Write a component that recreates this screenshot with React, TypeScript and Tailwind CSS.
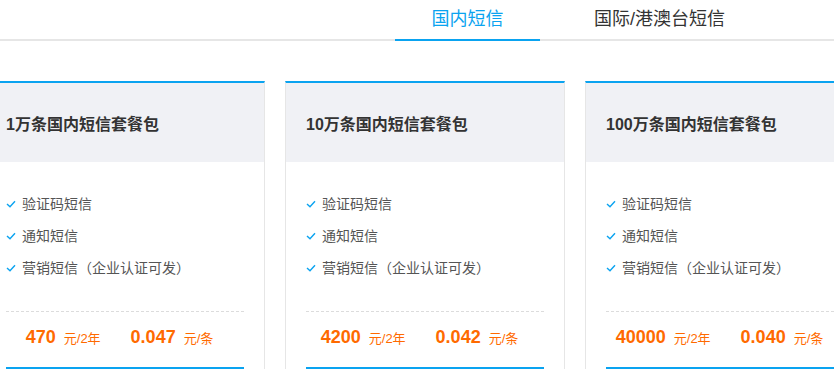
import React from 'react';

interface Pack {
  title: string;
  price: string;
  unit: string;
}

const packs: Pack[] = [
  { title: '1万条国内短信套餐包', price: '470', unit: '0.047' },
  { title: '10万条国内短信套餐包', price: '4200', unit: '0.042' },
  { title: '100万条国内短信套餐包', price: '40000', unit: '0.040' },
];

const features = ['验证码短信', '通知短信', '营销短信（企业认证可发）'];

function Check() {
  return (
    <svg width="10" height="8" viewBox="0 0 10 8" className="shrink-0">
      <polyline points="1,4 4,6.8 9,1.2" fill="none" stroke="#0aa3f0" strokeWidth="1.4" />
    </svg>
  );
}

function PackCard({ pack }: { pack: Pack }) {
  return (
    <div className="w-[280px] shrink-0 border-t-2 border-x border-t-[#0aa3f0] border-x-[#e6e6e6] bg-white">
      <div className="h-[79px] bg-[#f0f1f5] flex items-center px-5 pt-[4px] text-[16px] font-bold text-[#333]">
        {pack.title}
      </div>
      <div className="px-5 pt-[26px]">
        {features.map(f => (
          <div key={f} className="h-8 flex items-center gap-[6px] text-[14px] text-[#555]">
            <Check />
            <span>{f}</span>
          </div>
        ))}
        <div className="mt-[27px] border-t border-dashed border-[#dcdcdc]" />
        <div className="h-[50px] flex items-center justify-center gap-[30px] pr-[11px] text-[#ff6a00]">
          <div className="flex items-baseline">
            <span className="text-[18px] font-bold">{pack.price}</span>
            <span className="ml-[8px] text-[13px]">元/2年</span>
          </div>
          <div className="flex items-baseline">
            <span className="text-[18px] font-bold">{pack.unit}</span>
            <span className="ml-[8px] text-[13px]">元/条</span>
          </div>
        </div>
        {/* buy button, only its top edge is in view */}
        <div className="mt-[5px] h-[40px] border-2 border-[#0aa3f0]" />
      </div>
    </div>
  );
}

export default function App() {
  return (
    <div
      className="w-[834px] h-[369px] overflow-hidden bg-white"
      style={{ fontFamily: '"Liberation Sans", "Noto Sans CJK SC", sans-serif' }}
    >
      <div className="flex h-[41px] border-b-2 border-[#e6e6e6] pl-[395px] text-[18px]">
        <div className="w-[145px] -mb-[2px] border-b-2 border-[#0aa3f0] flex items-center justify-center text-[#0aa3f0]">
          国内短信
        </div>
        <div className="w-[239px] flex items-center justify-center text-[#333]">
          国际/港澳台短信
        </div>
      </div>
      <div className="mt-10 -ml-[15px] flex gap-5">
        {packs.map(p => (
          <PackCard key={p.title} pack={p} />
        ))}
      </div>
    </div>
  );
}
